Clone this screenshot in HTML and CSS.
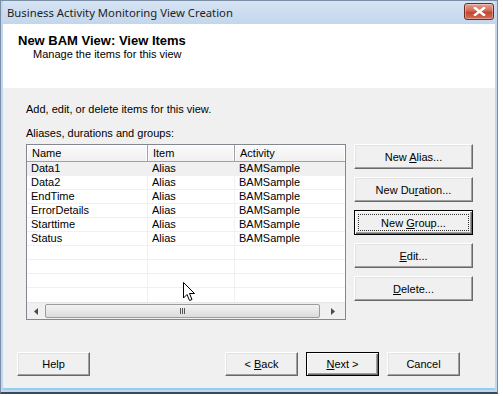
FILE: index.html
```html
<!DOCTYPE html>
<html lang="en">
<head>
    <meta charset="UTF-8">
    <title>Business Activity Monitoring View Creation</title>
    <link rel="stylesheet" href="styles.css">
</head>
<body>

    <div class="window">

        <!-- Title bar -->
        <div class="titlebar">
            <span class="title">Business Activity Monitoring View Creation</span>
            <div class="close-btn">
                <svg width="13" height="9" viewBox="0 0 13 9">
                    <path d="M2 1 L11 8 M11 1 L2 8" stroke="#fff" stroke-width="2.4" stroke-linecap="square"/>
                </svg>
            </div>
        </div>

        <!-- Wizard header -->
        <div class="header">
            <h1>New BAM View: View Items</h1>
            <p>Manage the items for this view</p>
        </div>

        <!-- Body -->
        <div class="body">
            <p class="intro">Add, edit, or delete items for this view.</p>
            <p class="label">Aliases, durations and groups:</p>

            <div class="main">
                <div class="listview">
                    <div class="lv-header">
                        <div class="col c1">Name</div>
                        <div class="col c2">Item</div>
                        <div class="col c3">Activity</div>
                    </div>
                    <div class="lv-rows">
                        <div class="row selected"><div class="cell c1">Data1</div><div class="cell c2">Alias</div><div class="cell c3">BAMSample</div></div>
                        <div class="row"><div class="cell c1">Data2</div><div class="cell c2">Alias</div><div class="cell c3">BAMSample</div></div>
                        <div class="row"><div class="cell c1">EndTime</div><div class="cell c2">Alias</div><div class="cell c3">BAMSample</div></div>
                        <div class="row"><div class="cell c1">ErrorDetails</div><div class="cell c2">Alias</div><div class="cell c3">BAMSample</div></div>
                        <div class="row"><div class="cell c1">Starttime</div><div class="cell c2">Alias</div><div class="cell c3">BAMSample</div></div>
                        <div class="row"><div class="cell c1">Status</div><div class="cell c2">Alias</div><div class="cell c3">BAMSample</div></div>
                        <div class="row"><div class="cell c1"></div><div class="cell c2"></div><div class="cell c3"></div></div>
                        <div class="row"><div class="cell c1"></div><div class="cell c2"></div><div class="cell c3"></div></div>
                        <div class="row"><div class="cell c1"></div><div class="cell c2"></div><div class="cell c3"></div></div>
                        <div class="row last"><div class="cell c1"></div><div class="cell c2"></div><div class="cell c3"></div></div>
                    </div>
                    <div class="hscroll">
                        <div class="arrow left">
                            <svg width="4" height="7" viewBox="0 0 4 7"><path d="M4 0 L0 3.5 L4 7 Z" fill="#4a4a4a"/></svg>
                        </div>
                        <div class="thumb">
                            <span class="grip"></span><span class="grip"></span><span class="grip"></span>
                        </div>
                        <div class="arrow right">
                            <svg width="4" height="7" viewBox="0 0 4 7"><path d="M0 0 L4 3.5 L0 7 Z" fill="#4a4a4a"/></svg>
                        </div>
                    </div>
                </div>

                <div class="side-buttons">
                    <div class="btn wide"><span>New <u>A</u>lias...</span></div>
                    <div class="btn wide"><span>New Du<u>r</u>ation...</span></div>
                    <div class="btn wide focused"><span class="focus-ring"><span>New <u>G</u>roup...</span></span></div>
                    <div class="btn wide"><span><u>E</u>dit...</span></div>
                    <div class="btn wide"><span><u>D</u>elete...</span></div>
                </div>
            </div>

            <div class="footer">
                <div class="btn"><span>Help</span></div>
                <div class="spacer"></div>
                <div class="btn"><span>&lt; <u>B</u>ack</span></div>
                <div class="btn default"><span><u>N</u>ext &gt;</span></div>
                <div class="btn"><span>Cancel</span></div>
            </div>
        </div>

        <!-- Mouse pointer -->
        <svg class="cursor" width="13" height="20" viewBox="0 0 13 20">
            <path d="M0.5 0.5 L0.5 16 L4 12.5 L6.5 18.5 L9 17.5 L6.5 11.5 L11.5 11.5 Z" fill="#fff" stroke="#000" stroke-width="1"/>
        </svg>
    </div>

</body>
</html>
```

FILE: styles.css
```css
* { margin: 0; padding: 0; box-sizing: border-box; }
body {
    font-family: "Liberation Sans", Arial, sans-serif;
    font-size: 11px;
    color: #000;
    background: #fff;
    width: 503px;
    height: 396px;
    overflow: hidden;
}

/* Window frame */
.window {
    position: relative;
    width: 498px;
    height: 394px;
    border: 1px solid #7b8ea6;
    border-bottom: 2px solid #3a4a5c;
    background: #c3d6ec;
    padding: 0 2px 2px 2px;
    display: flex;
    flex-direction: column;
}

.titlebar {
    height: 23px;
    display: flex;
    align-items: center;
    justify-content: space-between;
    background: linear-gradient(#d6e4f3, #c3d6ec);
}
.title {
    font-family: "Noto Sans", "Open Sans", sans-serif;
    font-size: 11.3px;
    color: #1e1e1e;
    padding-left: 4px;
}
.close-btn {
    width: 30px;
    height: 17px;
    margin-right: 1px;
    margin-top: -2px;
    border: 1px solid #6d2a20;
    border-radius: 3px;
    background: linear-gradient(#e5a493, #d36b55 45%, #c24630 55%, #d26e56);
    display: flex;
    align-items: center;
    justify-content: center;
    box-shadow: inset 0 0 0 1px rgba(255,255,255,0.35);
}

/* Header */
.header {
    height: 64px;
    background: #fff;
    padding: 9px 0 0 15px;
}
.header h1 {
    font-size: 13px;
    font-weight: bold;
    line-height: 15px;
}
.header p {
    margin-left: 15px;
    line-height: 13px;
}

/* Body */
.body {
    flex: 1;
    background: #f0f0f0;
    padding: 15px 0 0 23px;
    border-bottom: 2px solid #8ed0ee;
}
.intro { line-height: 13px; margin-bottom: 11px; }
.label { line-height: 13px; margin-bottom: 4px; }

.main {
    display: flex;
    gap: 8px;
}

/* List view */
.listview {
    width: 320px;
    height: 176px;
    border: 1px solid #828790;
    background: #fff;
    display: flex;
    flex-direction: column;
}
.c1 { width: 121px; }
.c2 { width: 87px; }
.c3 { flex: 1; }

.lv-header {
    display: flex;
    height: 17px;
    background: linear-gradient(#fafafa, #f0f0f0);
    border-bottom: 1px solid #a0a0a0;
}
.lv-header .col {
    padding-left: 5px;
    line-height: 16px;
    border-right: 1px solid #a0a0a0;
    box-shadow: inset -1px 0 0 #fff, inset 1px 1px 0 #fff;
}
.lv-header .c3 { border-right: none; }

.lv-rows { flex: 1; }
.row {
    display: flex;
    height: 14px;
    border-bottom: 1px solid #f0f0f0;
}
.row.selected { background: #f0f0f0; }
.row.last { border-bottom: none; }
.cell {
    padding-left: 4px;
    line-height: 13px;
    border-right: 1px solid #f0f0f0;
    white-space: nowrap;
}
.cell.c3 { border-right: none; }

.hscroll {
    height: 17px;
    display: flex;
    background: #f0f0f0;
    border-top: 1px solid #e6e6e6;
}
.arrow {
    width: 18px;
    display: flex;
    align-items: center;
    justify-content: center;
}
.arrow.right { width: 25px; }
.thumb {
    flex: 1;
    margin: 1px 0;
    border: 1px solid #9c9c9c;
    border-radius: 2px;
    background: linear-gradient(#f2f2f2, #dcdcdc);
    display: flex;
    align-items: center;
    justify-content: center;
    gap: 1px;
}
.grip {
    width: 1px;
    height: 6px;
    background: #555;
}

/* Buttons */
.side-buttons {
    display: flex;
    flex-direction: column;
    gap: 8px;
}
.btn {
    width: 73px;
    height: 24px;
    display: flex;
    align-items: center;
    justify-content: center;
    background: #f0f0f0;
    border: 1px solid;
    border-color: #fff #696969 #696969 #fff;
    box-shadow: inset -1px -1px 0 #a0a0a0, inset 1px 1px 0 #e3e3e3;
    white-space: pre;
}
.btn.wide { width: 119px; height: 25px; }
.btn.focused,
.btn.default {
    border: 1px solid #000;
    box-shadow: inset 1px 1px 0 #fff, inset -1px -1px 0 #696969, inset -2px -2px 0 #a0a0a0;
}
.focus-ring {
    width: 111px;
    height: 17px;
    border: 1px dotted #333;
    display: flex;
    align-items: center;
    justify-content: center;
}

.footer {
    display: flex;
    gap: 8px;
    margin: 32px 0 0 -9px;
    width: 443px;
}
.spacer { flex: 1; }

.cursor {
    position: absolute;
    left: 182px;
    top: 281px;
}
```
